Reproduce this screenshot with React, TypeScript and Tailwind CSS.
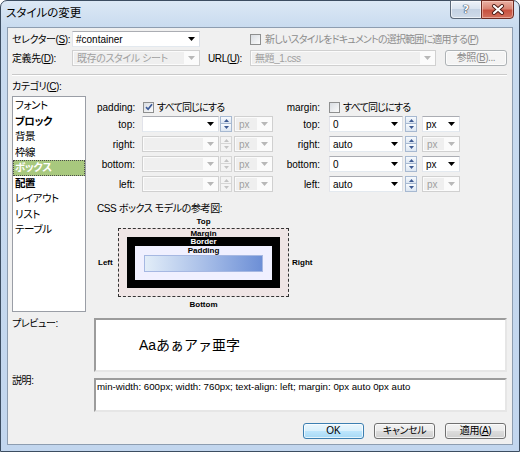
import React from "react";

const JP = "font-['Liberation_Sans','Noto_Sans_CJK_JP',sans-serif] [font-feature-settings:'palt']";

function Tri({ c = "#000" }: { c?: string }) {
  return (
    <svg width="7" height="4" viewBox="0 0 7 4" className="block">
      <path d="M0 0H7L3.5 4Z" fill={c} />
    </svg>
  );
}

function U({ children }: { children: React.ReactNode }) {
  return <span className="underline underline-offset-[1px]">{children}</span>;
}

function Combo({ w, value = "", disabled, className = "" }: { w: string; value?: string; disabled?: boolean; className?: string }) {
  if (disabled) {
    return (
      <div className={`${w} h-[16px] shrink-0 flex items-stretch border border-[#d0d0d0] bg-[#fbfbfb] ${className}`}>
        <div className="flex-1 flex items-center pl-[3px] m-[1px] mr-0 bg-[#efefef] text-[#a0a0a0] overflow-hidden whitespace-nowrap">
          {value}
        </div>
        <div className="w-[15px] flex items-center justify-center">
          <Tri c="#b8b8b8" />
        </div>
      </div>
    );
  }
  return (
    <div className={`${w} h-[16px] shrink-0 flex items-stretch border border-[#abadb3] border-l-[#e2e3ea] border-r-[#dbdfe6] border-b-[#e3e9ef] bg-white ${className}`}>
      <div className="flex-1 flex items-center pl-[3px] text-black overflow-hidden whitespace-nowrap">{value}</div>
      <div className="w-[15px] flex items-center justify-center">
        <Tri />
      </div>
    </div>
  );
}

function Spin({ disabled, className = "" }: { disabled?: boolean; className?: string }) {
  const c = disabled ? "#c4c4c4" : "#3d5a92";
  const box = disabled ? "border-[#d6d6d6] bg-[#f4f4f4]" : "border-[#a7b9d1] bg-gradient-to-b from-[#f8fbfe] to-[#dce6f2]";
  return (
    <div className={`w-[12px] h-[16px] shrink-0 flex flex-col ${className}`}>
      <div className={`h-[8px] border ${box} flex items-center justify-center`}>
        <svg width="5" height="3" viewBox="0 0 5 3" className="block">
          <path d="M0 3H5L2.5 0Z" fill={c} />
        </svg>
      </div>
      <div className={`h-[8px] border border-t-0 ${box} flex items-center justify-center`}>
        <svg width="5" height="3" viewBox="0 0 5 3" className="block">
          <path d="M0 0H5L2.5 3Z" fill={c} />
        </svg>
      </div>
    </div>
  );
}

function Check({ checked, className = "" }: { checked?: boolean; className?: string }) {
  return (
    <div className={`w-[11px] h-[11px] shrink-0 border border-[#8e8f8f] bg-gradient-to-br from-[#d9dde2] to-[#fbfbfb] flex items-center justify-center ${className}`}>
      {checked && (
        <svg width="8" height="8" viewBox="0 0 8 8" className="block">
          <path d="M1 4.2L3.1 6.3L7 1.2" stroke="#3b5a99" strokeWidth="1.7" fill="none" />
        </svg>
      )}
    </div>
  );
}

function Btn({ children, kind = "normal", w }: { children: React.ReactNode; kind?: "normal" | "def" | "dis"; w: string }) {
  const cls =
    kind === "def"
      ? "border-[#3c7fb1] bg-[linear-gradient(to_bottom,#eaf6fd_0%,#d9f0fc_50%,#bee6fd_50%,#a7d9f5_100%)] text-black"
      : kind === "dis"
      ? "border-[#adb2b5] bg-[#f4f4f4] text-[#8a8a8a]"
      : "border-[#707070] bg-[linear-gradient(to_bottom,#f2f2f2_0%,#ebebeb_50%,#dddddd_50%,#cfcfcf_100%)] text-black";
  return (
    <div className={`${w} h-[16px] shrink-0 rounded-[3px] border ${cls} shadow-[inset_0_0_0_1px_rgba(255,255,255,0.7)] flex items-center justify-center leading-none`}>
      {children}
    </div>
  );
}

const cats: { t: string; b?: boolean; sel?: boolean }[] = [
  { t: "フォント" },
  { t: "ブロック", b: true },
  { t: "背景" },
  { t: "枠線" },
  { t: "ボックス", b: true, sel: true },
  { t: "配置", b: true },
  { t: "レイアウト" },
  { t: "リスト" },
  { t: "テーブル" },
];

const padRows = [
  { l: "top:", on: true },
  { l: "right:", on: false },
  { l: "bottom:", on: false },
  { l: "left:", on: false },
];
const marRows = [
  { l: "top:", v: "0", unit: true },
  { l: "right:", v: "auto", unit: false },
  { l: "bottom:", v: "0", unit: true },
  { l: "left:", v: "auto", unit: false },
];

const LAT = "font-['Liberation_Sans',sans-serif] text-[10px] tracking-normal";

export default function App() {
  return (
    <div className="w-[520px] h-[452px] bg-white">
      <div className="relative w-[520px] h-[452px] rounded-t-[7px] border border-[#3c4d61] bg-[linear-gradient(to_bottom,#dce8f5_0px,#c9dbef_26px,#c2d6ee_100%)] flex flex-col">
        {/* title bar */}
        <div className={`h-[26px] shrink-0 pl-[5px] pt-[5px] text-[11.5px] leading-[15px] text-black ${JP}`}>スタイルの変更</div>
        {/* caption buttons */}
        <div className="absolute top-[-1px] right-[5px] flex">
          <div className="w-[31px] h-[19px] rounded-bl-[4px] border border-[#5b6878] border-r-0 bg-[linear-gradient(to_bottom,#eef3f9_0%,#d8e2ee_50%,#c4d2e3_50%,#cfdbe9_100%)] shadow-[inset_0_0_0_1px_rgba(255,255,255,0.6)] flex items-center justify-center">
            <span className="font-['DejaVu_Sans',sans-serif] text-[11px] font-bold leading-none text-white [text-shadow:0_0_1px_#2b3a4f,0_0_1px_#2b3a4f,0_0_1px_#2b3a4f]">?</span>
          </div>
          <div className="w-[33px] h-[19px] rounded-br-[4px] border border-[#6e2a20] bg-[linear-gradient(to_bottom,#eab1a4_0%,#d98473_45%,#c7513f_55%,#d2705c_100%)] shadow-[inset_0_0_0_1px_rgba(255,220,210,0.5)] flex items-center justify-center">
            <svg width="14" height="11" viewBox="0 0 14 11" className="block">
              <path d="M3 2L11 9M11 2L3 9" stroke="#4a1a14" strokeWidth="4" strokeLinecap="round" />
              <path d="M3 2L11 9M11 2L3 9" stroke="#ffffff" strokeWidth="2.2" strokeLinecap="round" />
            </svg>
          </div>
        </div>

        {/* content */}
        <div className={`mx-[6px] h-[418px] shrink-0 border border-[#8d9db0] bg-[#f0f0f0] pl-[4px] pr-[5px] flex flex-col text-[10px] tracking-[-0.4px] text-black ${JP}`}>
          {/* row 1 */}
          <div className="mt-[3px] h-[16px] flex items-center">
            <div className="w-[60px] shrink-0 whitespace-nowrap">
              セレクター(<U>S</U>):
            </div>
            <Combo w="w-[128px]" className={LAT} value="#container" />
            <Check className="ml-[50px]" />
            <div className="ml-[4px] whitespace-nowrap text-[#8d8d8d] tracking-[-0.8px]">
              新しいスタイルをドキュメントの選択範囲に適用する(<U>P</U>)
            </div>
          </div>
          {/* row 2 */}
          <div className="mt-[3px] h-[16px] flex items-center">
            <div className="w-[60px] shrink-0 whitespace-nowrap">
              定義先(<U>D</U>):
            </div>
            <Combo w="w-[128px]" value="既存のスタイル シート" disabled />
            <div className="ml-[8px] w-[42px] shrink-0 whitespace-nowrap">
              URL(<U>U</U>):
            </div>
            <Combo w="w-[186px]" value="無題_1.css" disabled />
            <div className="ml-[9px]">
              <Btn w="w-[62px]" kind="dis">
                参照(<U>B</U>)...
              </Btn>
            </div>
          </div>
          {/* separator */}
          <div className="mt-[8px] h-[2px] border-t border-[#c9c9c9] border-b border-b-white" />
          {/* category label */}
          <div className="mt-[5px] h-[12px] leading-[12px]">
            カテゴリ(<U>C</U>):
          </div>
          {/* main */}
          <div className="mt-[3px] h-[216px] flex">
            <div className="w-[74px] h-full shrink-0 border border-[#9a9ea6] bg-white pt-[1px]">
              {cats.map((c) => (
                <div
                  key={c.t}
                  className={`h-[15.5px] leading-[15px] pl-[2px] whitespace-nowrap text-[10.5px] ${c.b ? "font-bold" : ""} ${
                    c.sel ? "bg-[#a8c87e] text-white outline outline-1 outline-dotted outline-[#4a4a4a] -outline-offset-1" : ""
                  }`}
                >
                  {c.t}
                </div>
              ))}
            </div>

            <div className="ml-[11px] flex-1 flex flex-col">
              {/* header */}
              <div className="mt-[3px] h-[16px] flex items-center">
                <div className={`w-[38px] shrink-0 text-right ${LAT}`}>padding:</div>
                <div className="w-[138px] shrink-0 flex items-center">
                  <Check checked className="ml-[8px]" />
                  <div className="ml-[3px] whitespace-nowrap tracking-[-0.8px]">すべて同じにする</div>
                </div>
                <div className={`w-[47px] shrink-0 text-right ${LAT}`}>margin:</div>
                <Check className="ml-[9px]" />
                <div className="ml-[3px] whitespace-nowrap tracking-[-0.8px]">すべて同じにする</div>
              </div>
              {padRows.map((p, i) => {
                const m = marRows[i];
                return (
                  <div key={p.l} className={`${i === 0 ? "mt-[1px]" : "mt-[4px]"} h-[16px] flex items-center`}>
                    <div className={`w-[38px] shrink-0 text-right ${LAT}`}>{p.l}</div>
                    <Combo w="w-[77px]" className={`ml-[7px] ${LAT}`} disabled={!p.on} />
                    <Spin className="ml-[1px]" disabled={!p.on} />
                    <Combo w="w-[39px]" className={`ml-[2px] ${LAT}`} value="px" disabled />
                    <div className={`w-[47px] shrink-0 text-right ${LAT}`}>{m.l}</div>
                    <Combo w="w-[74px]" className={`ml-[9px] ${LAT}`} value={m.v} />
                    <Spin className="ml-[2px]" />
                    <Combo w="w-[38px]" className={`ml-[5px] ${LAT}`} value="px" disabled={!m.unit} />
                  </div>
                );
              })}

              <div className="mt-[10px] h-[14px] leading-[14px] whitespace-nowrap">CSS ボックス モデルの参考図:</div>

              {/* diagram */}
              <div className="font-['Liberation_Sans',sans-serif] text-[8px] font-bold tracking-normal text-black">
                <div className="ml-[21px] w-[171px] h-[12px] leading-[12px] text-center">Top</div>
                <div className="flex items-center">
                  <div className="w-[21px] shrink-0 pl-[1px]">Left</div>
                  <div className="w-[171px] h-[69px] shrink-0 border border-dashed border-[#333] bg-[#efe5e5] flex flex-col">
                    <div className="h-[8px] leading-[10px] text-center">Margin</div>
                    <div className="mx-[8px] h-[51px] bg-black flex flex-col">
                      <div className="h-[9px] leading-[9px] text-center text-white">Border</div>
                      <div className="mx-[8px] h-[34px] bg-[#f0f0ff] flex flex-col">
                        <div className="h-[9px] leading-[9px] text-center">Padding</div>
                        <div className="mx-[9px] h-[17px] border border-[#a6b8e2] bg-gradient-to-r from-[#e2edf8] via-[#a9bfe8] to-[#6d8fd6]" />
                      </div>
                    </div>
                  </div>
                  <div className="ml-[3px]">Right</div>
                </div>
                <div className="ml-[21px] mt-[2px] w-[171px] h-[12px] leading-[12px] text-center">Bottom</div>
              </div>
            </div>
          </div>

          {/* preview */}
          <div className="mt-[6px] h-[54px] flex">
            <div className="w-[82px] shrink-0 leading-[12px]">プレビュー:</div>
            <div className="flex-1 border-2 border-t-[#9c9c9c] border-l-[#9c9c9c] border-b-[#e6e6e6] border-r-[#e6e6e6] bg-white flex items-center pl-[43px]">
              <span className="font-['Liberation_Sans','Noto_Sans_CJK_JP',sans-serif] [font-feature-settings:normal] tracking-normal text-[14px] leading-none">
                Aaあぁアァ亜字
              </span>
            </div>
          </div>

          {/* description */}
          <div className="mt-[6px] h-[34px] flex">
            <div className="w-[82px] shrink-0 leading-[12px] -mt-[3px]">説明:</div>
            <div className="flex-1 border-2 border-t-[#9c9c9c] border-l-[#9c9c9c] border-b-[#e6e6e6] border-r-[#e6e6e6] bg-white pl-[1px] pt-[1px]">
              <div className="font-['Liberation_Sans',sans-serif] text-[9.7px] tracking-normal leading-[12px] whitespace-nowrap">
                min-width: 600px; width: 760px; text-align: left; margin: 0px auto 0px auto
              </div>
            </div>
          </div>

          {/* buttons */}
          <div className="mt-[11px] h-[16px] flex justify-end gap-[10px] pr-[1px]">
            <Btn w="w-[61px]" kind="def">
              <span className="font-['Liberation_Sans',sans-serif] text-[10px] tracking-normal">OK</span>
            </Btn>
            <Btn w="w-[61px]">キャンセル</Btn>
            <Btn w="w-[61px]">
              適用(<U>A</U>)
            </Btn>
          </div>
        </div>
      </div>
    </div>
  );
}
